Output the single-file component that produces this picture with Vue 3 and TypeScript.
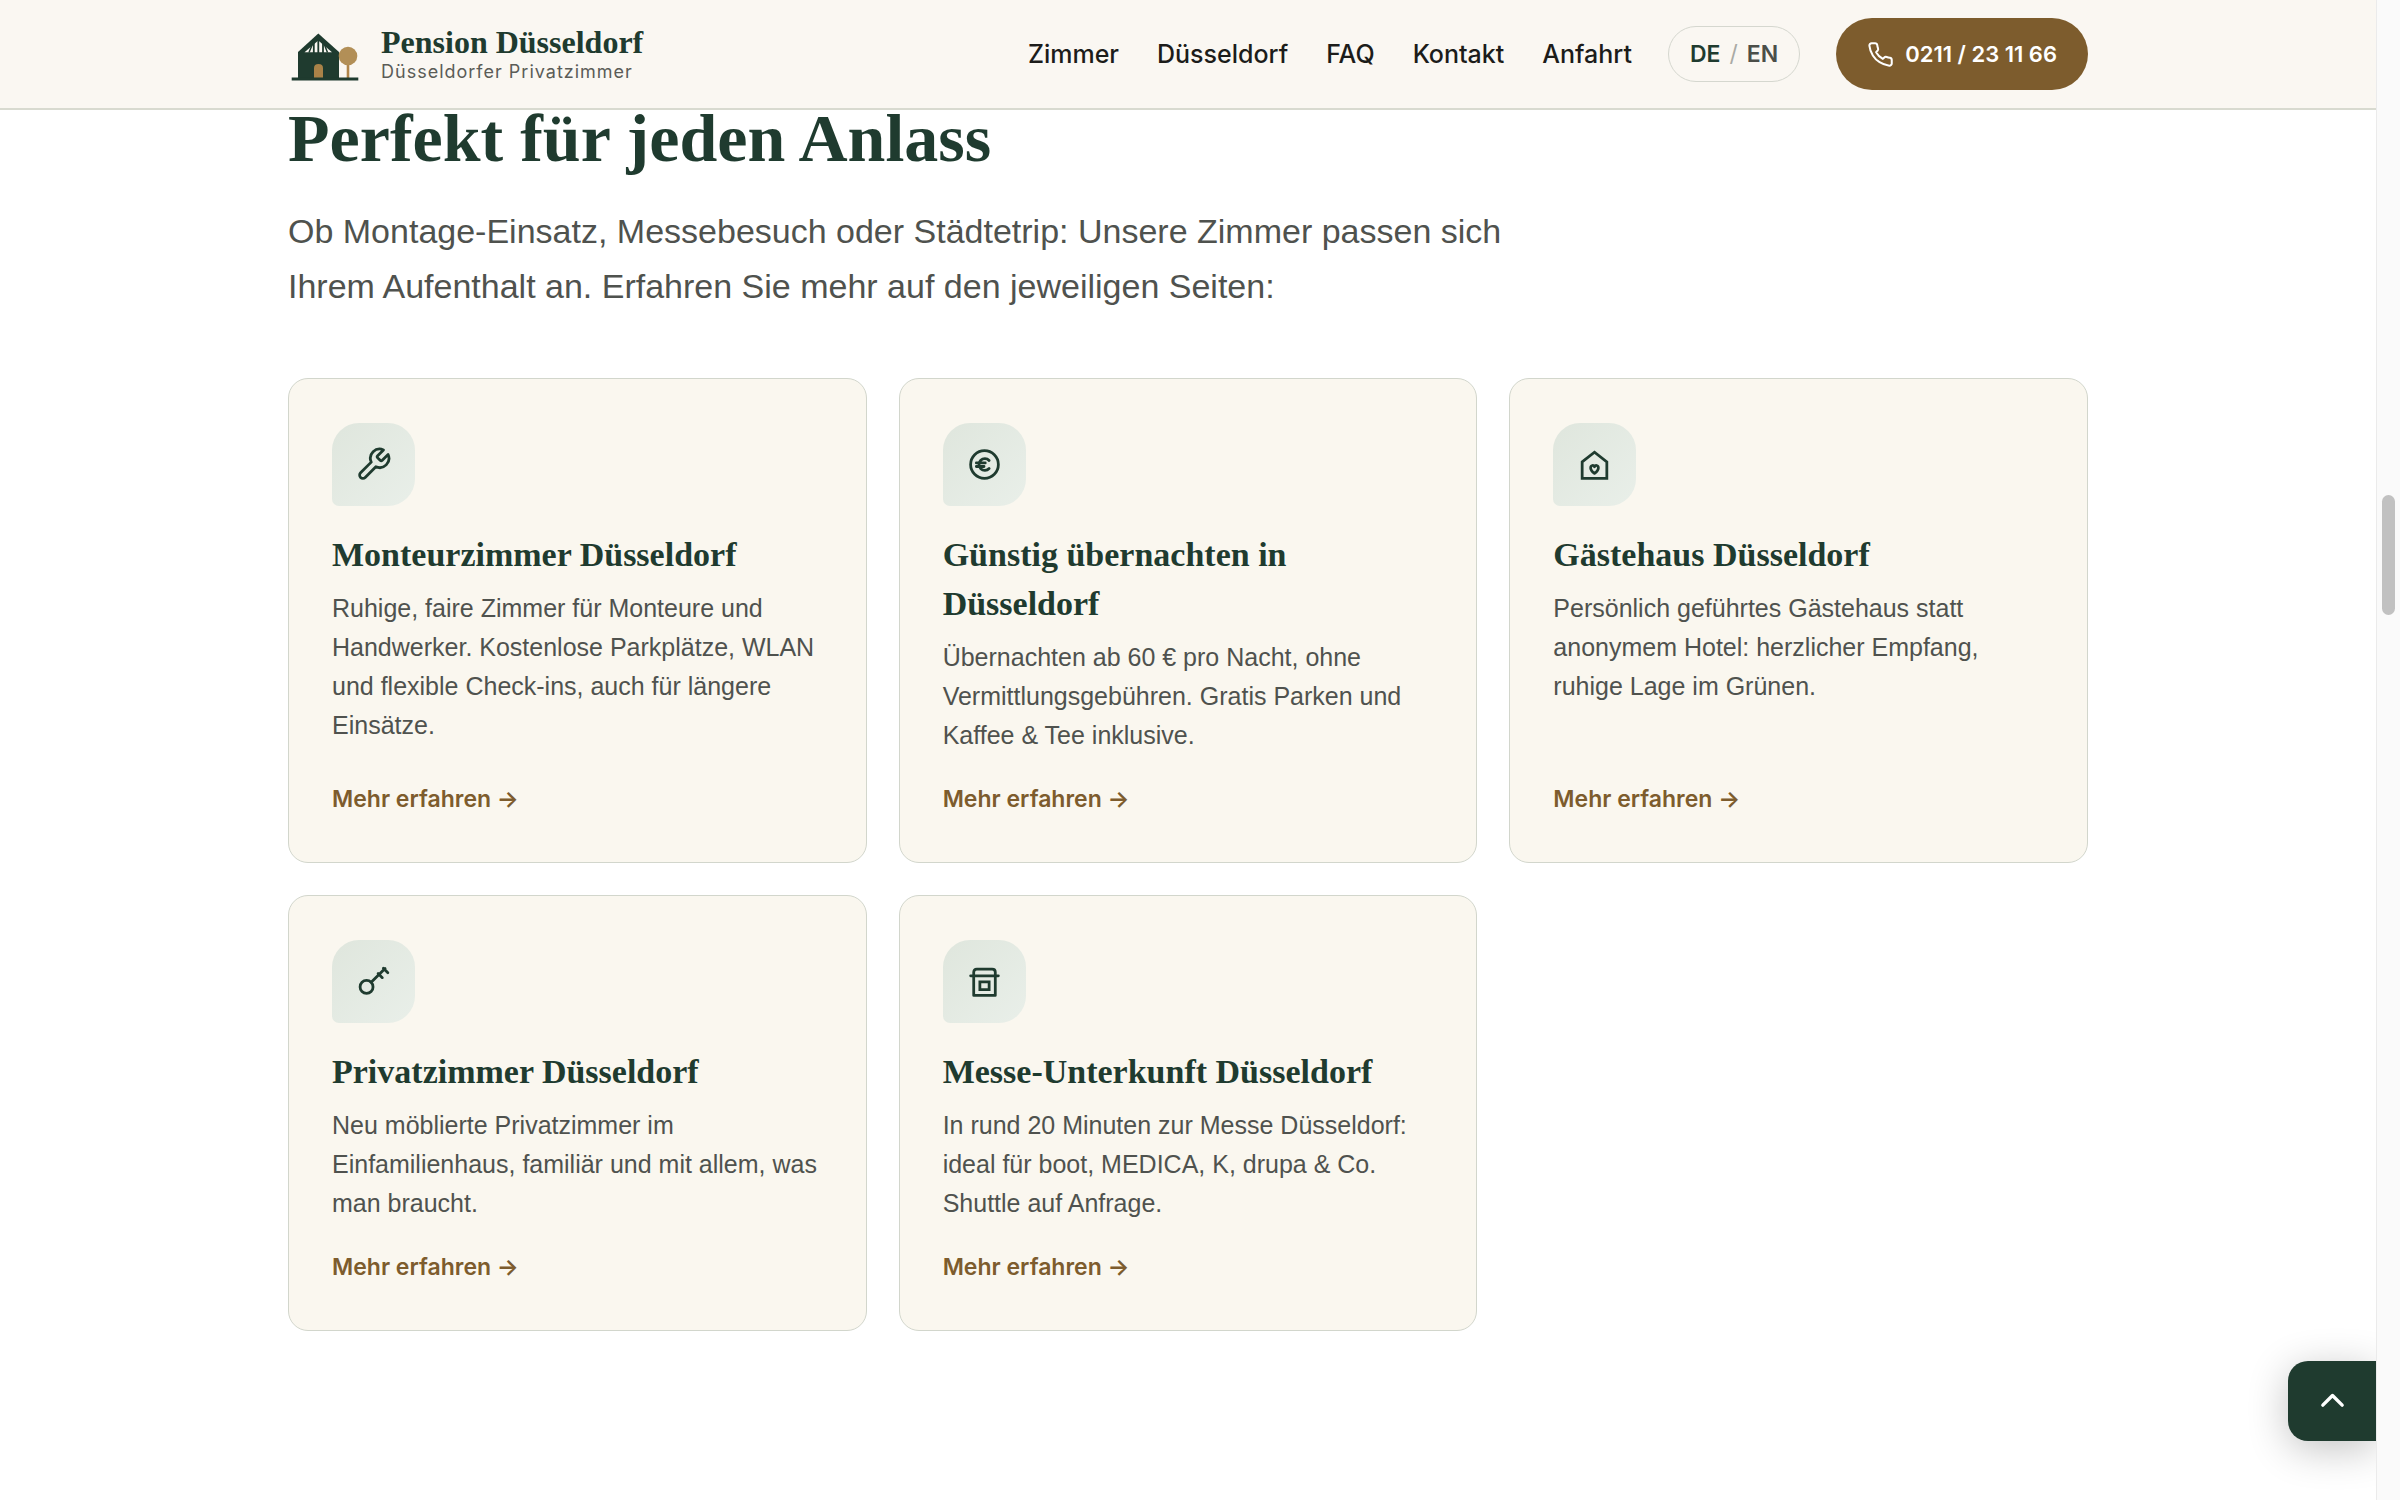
<script setup lang="ts">
interface NavItem {
  label: string
  href: string
}

interface Offer {
  icon: 'wrench' | 'euro' | 'home' | 'key' | 'fair'
  title: string
  text: string
  href: string
}

const navItems: NavItem[] = [
  { label: 'Zimmer', href: '#zimmer' },
  { label: 'Düsseldorf', href: '#duesseldorf' },
  { label: 'FAQ', href: '#faq' },
  { label: 'Kontakt', href: '#kontakt' },
  { label: 'Anfahrt', href: '#anfahrt' },
]

const offers: Offer[] = [
  {
    icon: 'wrench',
    title: 'Monteurzimmer Düsseldorf',
    text: 'Ruhige, faire Zimmer für Monteure und Handwerker. Kostenlose Parkplätze, WLAN und flexible Check-ins, auch für längere Einsätze.',
    href: '#monteurzimmer',
  },
  {
    icon: 'euro',
    title: 'Günstig übernachten in Düsseldorf',
    text: 'Übernachten ab 60 € pro Nacht, ohne Vermittlungsgebühren. Gratis Parken und Kaffee & Tee inklusive.',
    href: '#guenstig',
  },
  {
    icon: 'home',
    title: 'Gästehaus Düsseldorf',
    text: 'Persönlich geführtes Gästehaus statt anonymem Hotel: herzlicher Empfang, ruhige Lage im Grünen.',
    href: '#gaestehaus',
  },
  {
    icon: 'key',
    title: 'Privatzimmer Düsseldorf',
    text: 'Neu möblierte Privatzimmer im Einfamilienhaus, familiär und mit allem, was man braucht.',
    href: '#privatzimmer',
  },
  {
    icon: 'fair',
    title: 'Messe-Unterkunft Düsseldorf',
    text: 'In rund 20 Minuten zur Messe Düsseldorf: ideal für boot, MEDICA, K, drupa & Co. Shuttle auf Anfrage.',
    href: '#messe',
  },
]

function scrollToTop(): void {
  window.scrollTo({ top: 0, behavior: 'smooth' })
}
</script>

<template>
  <div class="viewport">
    <div class="page">
      <header class="header">
        <div class="container header-row">
          <a class="brand" href="#start">
            <svg class="brand-mark" viewBox="-3 -6 74 54" aria-hidden="true">
              <path d="M7 19 27.300 0.500 48 19V45H7z" fill="#1f3b2f" />
              <path d="M13.500 19.300 27.300 7.500 41 19.300z" fill="#faf7f2" />
              <path d="M22.800 8v12M27.300 6v14M32 8v12" stroke="#1f3b2f" stroke-width="1.800" />
              <path d="M22.500 8.500 18 19.500M32.200 8.500 36.500 19.500" stroke="#1f3b2f" stroke-width="1.500" />
              <path d="M23 45V35q0-4 4.500-4t4.500 4v10z" fill="#a98248" />
              <path d="M57 30v15" stroke="#b0854a" stroke-width="2.600" />
              <circle cx="57" cy="23" r="9.300" fill="#b28f57" />
              <rect x="0.700" y="44.500" width="66.600" height="3" fill="#1f3b2f" />
            </svg>
            <span class="brand-text">
              <span class="brand-name">Pension Düsseldorf</span>
              <span class="brand-sub">Düsseldorfer Privatzimmer</span>
            </span>
          </a>

          <div class="header-actions">
            <nav class="nav" aria-label="Hauptnavigation">
              <a v-for="item in navItems" :key="item.href" :href="item.href">{{ item.label }}</a>
            </nav>
            <div class="lang">
              <a class="lang-active" href="#de">DE</a>
              <span class="lang-sep">/</span>
              <a href="#en">EN</a>
            </div>
            <a class="call" href="tel:+49211231166">
              <svg class="call-icon" viewBox="0 0 24 24" aria-hidden="true">
                <path
                  d="M22 16.920v3a2 2 0 0 1-2.180 2 19.790 19.790 0 0 1-8.630-3.070 19.500 19.500 0 0 1-6-6 19.790 19.790 0 0 1-3.070-8.670A2 2 0 0 1 4.110 2h3a2 2 0 0 1 2 1.720c.127.960.361 1.903.7 2.810a2 2 0 0 1-.45 2.110L8.090 9.910a16 16 0 0 0 6 6l1.270-1.270a2 2 0 0 1 2.110-.45c.907.339 1.850.573 2.810.7A2 2 0 0 1 22 16.920z"
                />
              </svg>
              <span>0211 / 23 11 66</span>
            </a>
          </div>
        </div>
      </header>

      <main class="container content">
        <h2 class="heading">Perfekt für jeden Anlass</h2>
        <p class="lead">
          Ob Montage-Einsatz, Messebesuch oder Städtetrip: Unsere Zimmer passen sich Ihrem Aufenthalt an.
          Erfahren Sie mehr auf den jeweiligen Seiten:
        </p>

        <div class="grid">
          <article v-for="offer in offers" :key="offer.href" class="card">
            <div class="badge">
              <svg class="badge-icon" viewBox="0 0 24 24" aria-hidden="true">
                <path
                  v-if="offer.icon === 'wrench'"
                  d="M14.700 6.300a1 1 0 0 0 0 1.400l1.600 1.600a1 1 0 0 0 1.400 0l3.770-3.770a6 6 0 0 1-7.940 7.940l-6.910 6.910a2.120 2.120 0 0 1-3-3l6.910-6.910a6 6 0 0 1 7.940-7.940l-3.760 3.760z"
                />
                <template v-else-if="offer.icon === 'euro'">
                  <circle cx="12" cy="12" r="9" />
                  <path d="M15 9.400a3.800 3.800 0 1 0 0 5.200M6.700 11h5.800M6.700 13.300h5" />
                </template>
                <template v-else-if="offer.icon === 'home'">
                  <path d="M4 10.300 12 4l8 6.300V21H4z" stroke-linejoin="miter" />
                  <path
                    d="M12 17.800c-1.500-1.200-2.500-2.300-2.500-3.600 0-1.900 2-2 2.500-.7.500-1.300 2.500-1.200 2.500.7 0 1.300-1 2.400-2.500 3.600z"
                  />
                </template>
                <template v-else-if="offer.icon === 'key'">
                  <circle cx="7.500" cy="15.500" r="4.200" />
                  <path d="M10.500 12.500 19.500 3.500M18.400 3.400l2.900 2.900M15 6.800l2.700 2.700" />
                </template>
                <template v-else>
                  <path d="M3 8.300h18M5 8.300V6q0-2 2-2h10q2 0 2 2v2.300M5 8.300V21h14V8.300" />
                  <path d="M9 12.300h6v4.900H9z" stroke-linejoin="miter" />
                </template>
              </svg>
            </div>
            <h3 class="card-title">{{ offer.title }}</h3>
            <p class="card-text">{{ offer.text }}</p>
            <a class="card-link" :href="offer.href">Mehr erfahren →</a>
          </article>
        </div>
      </main>

      <button class="to-top" type="button" aria-label="Nach oben" @click="scrollToTop">
        <svg viewBox="0 0 24 24" aria-hidden="true">
          <path d="m4 15 8-8 8 8" />
        </svg>
      </button>
    </div>

    <div class="scroll-track" aria-hidden="true">
      <div class="scroll-thumb"></div>
    </div>
  </div>
</template>

<style>
body {
  margin: 0;
  background: #ffffff;
}
</style>

<style scoped>
.viewport {
  display: flex;
  min-height: 100vh;
  font-family: "Liberation Sans", Arial, sans-serif;
  color: #1c1c1a;
}

.page {
  position: relative;
  flex: 1;
  min-width: 0;
  overflow: hidden;
  background: #ffffff;
}

.container {
  box-sizing: border-box;
  width: 100%;
  max-width: 1864px;
  margin: 0 auto;
  padding: 0 32px;
}

a {
  color: inherit;
  text-decoration: none;
}

.header {
  border-bottom: 2px solid #d8dad0;
  background: #faf7f2;
}

.header-row {
  display: flex;
  align-items: center;
  justify-content: space-between;
  min-height: 108px;
}

.brand {
  display: flex;
  align-items: center;
  gap: 19px;
}

.brand-mark {
  width: 74px;
  height: 54px;
}

.brand-text {
  display: flex;
  flex-direction: column;
  padding-top: 2px;
}

.brand-name {
  font: 700 32px/34px "Liberation Serif", "Times New Roman", serif;
  color: #1f3b2f;
}

.brand-sub {
  font: 400 18px/26px "Inter", sans-serif;
  letter-spacing: 1px;
  color: #5b5c57;
}

.header-actions {
  display: flex;
  align-items: center;
  gap: 36px;
  font-family: "Inter", sans-serif;
}

.nav {
  display: flex;
  gap: 38px;
  font-size: 25px;
  font-weight: 500;
}

.lang {
  display: flex;
  align-items: center;
  gap: 9px;
  height: 54px;
  padding: 0 21px;
  border: 1px solid #d5d7cf;
  border-radius: 28px;
  font-size: 23px;
  font-weight: 600;
  color: #4b4e49;
}

.lang-active {
  color: #1f3b2f;
}

.lang-sep {
  font-weight: 400;
  color: #a9aaa5;
}

.call {
  display: flex;
  align-items: center;
  gap: 11px;
  height: 72px;
  padding: 0 31px;
  border-radius: 36px;
  background: #7d5c2d;
  font-size: 22px;
  font-weight: 600;
  color: #ffffff;
}

.call-icon {
  width: 27px;
  height: 27px;
  fill: none;
  stroke: currentColor;
  stroke-width: 1.8;
  stroke-linecap: round;
  stroke-linejoin: round;
}

.content {
  padding-bottom: 120px;
}

.heading {
  margin: 0;
  font: 700 68px/56px "Liberation Serif", "Times New Roman", serif;
  color: #1f3b2f;
}

.lead {
  max-width: 1240px;
  margin: 38px 0 64px;
  font-size: 34px;
  line-height: 55px;
  color: #4f524e;
}

.grid {
  display: grid;
  grid-template-columns: repeat(3, minmax(0, 1fr));
  gap: 32px;
}

.card {
  display: flex;
  flex-direction: column;
  align-items: flex-start;
  padding: 44px 43px 42px;
  border: 1px solid #d2d6cc;
  border-radius: 20px;
  background: #faf7ef;
}

.badge {
  display: flex;
  align-items: center;
  justify-content: center;
  width: 83px;
  height: 83px;
  border-radius: 27px 27px 27px 7px;
  background: linear-gradient(135deg, #dfe6dd, #e9efe9);
}

.badge-icon {
  width: 37px;
  height: 37px;
  fill: none;
  stroke: #1f3b2f;
  stroke-width: 1.8;
  stroke-linecap: round;
  stroke-linejoin: round;
}

.card-title {
  margin: 24px 0 10px;
  font: 700 34px/49px "Liberation Serif", "Times New Roman", serif;
  color: #1f3b2f;
}

.card-text {
  margin: 0 0 23px;
  font-size: 25px;
  line-height: 39px;
  color: #4f524e;
}

.card-link {
  margin-top: auto;
  font: 600 23px/42px "Inter", sans-serif;
  color: #7d5c2d;
}

.to-top {
  position: absolute;
  right: 0;
  bottom: 59px;
  display: flex;
  align-items: center;
  justify-content: center;
  width: 88px;
  height: 80px;
  padding: 0;
  border: 0;
  border-radius: 20px 0 0 20px;
  background: #1f3b2f;
  box-shadow: 0 8px 40px rgba(0, 0, 0, 0.24);
}

.to-top svg {
  width: 29px;
  height: 29px;
  fill: none;
  stroke: #ffffff;
  stroke-width: 2.8;
  stroke-linecap: round;
  stroke-linejoin: round;
}

.scroll-track {
  box-sizing: border-box;
  width: 24px;
  padding: 495px 3px 0 5px;
  border-left: 1px solid #ebebeb;
  background: #fafafa;
}

.scroll-thumb {
  width: 13px;
  height: 120px;
  border-radius: 7px;
  background: #c1c1c1;
}
</style>
